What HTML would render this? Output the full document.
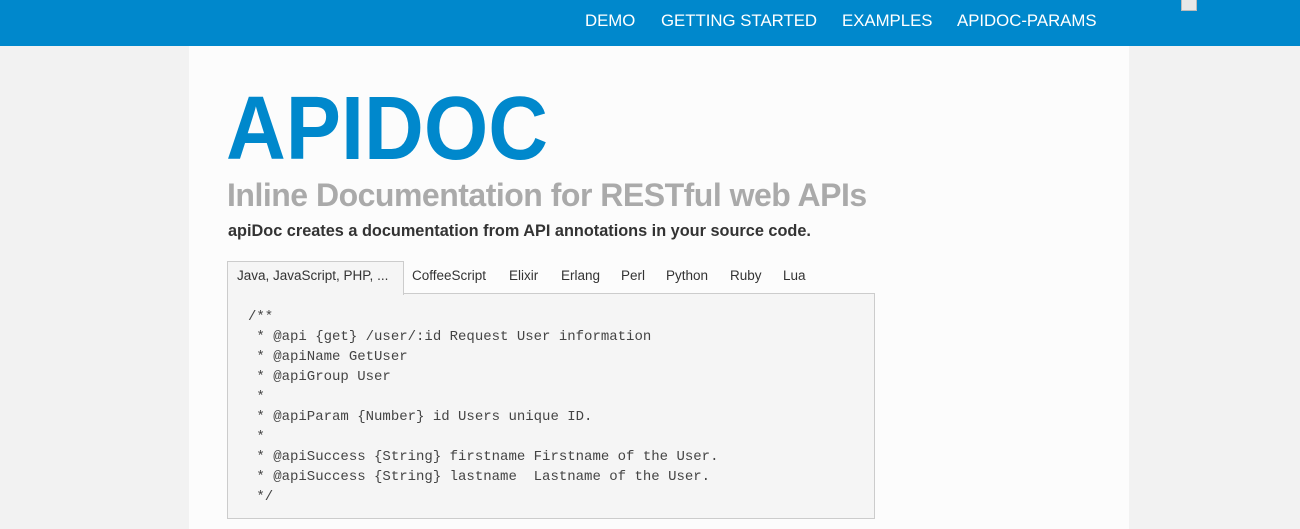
<!DOCTYPE html>
<html><head><style>
body{margin:0;background:#f2f2f2;font-family:"Liberation Sans",sans-serif;width:1300px;height:529px;overflow:hidden;position:relative}
.nav{position:absolute;left:0;top:0;width:1300px;height:46px;background:#0088cc}
.nav a{position:absolute;top:11px;color:#fff;font-size:16.8px;text-decoration:none;white-space:nowrap}
.main{position:absolute;left:189px;top:46px;width:940px;height:483px;background:#fcfcfc}
.h1{position:absolute;left:226px;top:78px;font-size:90px;font-weight:bold;color:#0088cc;transform:scaleX(0.92);transform-origin:left}
.h2{position:absolute;left:227px;top:177px;font-size:32px;font-weight:bold;color:#aaa;white-space:nowrap;letter-spacing:-0.5px}
.h3{position:absolute;left:228px;top:222px;font-size:16.3px;font-weight:bold;color:#333;white-space:nowrap}
.tabs span{position:absolute;top:268px;font-size:13.5px;color:#333;white-space:nowrap}
.active{position:absolute;left:227px;top:261px;width:175px;height:33px;border:1px solid #ccc;border-bottom:none;background:#f5f5f5;z-index:2}
.code{position:absolute;left:227px;top:293px;width:646px;height:224px;border:1px solid #ccc;background:#f5f5f5}
pre{margin:0;position:absolute;left:248px;top:307px;font-family:"Liberation Mono",monospace;font-size:14px;line-height:20px;color:#444;z-index:3}
</style></head><body>
<div class="nav">
<a style="left:585px">DEMO</a>
<a style="left:661px">GETTING STARTED</a>
<a style="left:842px">EXAMPLES</a>
<a style="left:957px">APIDOC-PARAMS</a>
<div style="position:absolute;left:1181px;top:0;width:14px;height:10px;border:1px solid #bbb;border-top:none;background:#e8e8e8"></div>
</div>
<div class="main"></div>
<div class="h1">APIDOC</div>
<div class="h2">Inline Documentation for RESTful web APIs</div>
<div class="h3">apiDoc creates a documentation from API annotations in your source code.</div>
<div class="code"></div>
<div class="active"></div>
<div class="tabs">
<span style="left:237px;z-index:3">Java, JavaScript, PHP, ...</span>
<span style="left:412px">CoffeeScript</span>
<span style="left:509px">Elixir</span>
<span style="left:561px">Erlang</span>
<span style="left:621px">Perl</span>
<span style="left:666px">Python</span>
<span style="left:730px">Ruby</span>
<span style="left:783px">Lua</span>
</div>
<pre>/**
 * @api {get} /user/:id Request User information
 * @apiName GetUser
 * @apiGroup User
 *
 * @apiParam {Number} id Users unique ID.
 *
 * @apiSuccess {String} firstname Firstname of the User.
 * @apiSuccess {String} lastname  Lastname of the User.
 */</pre>
</body></html>
